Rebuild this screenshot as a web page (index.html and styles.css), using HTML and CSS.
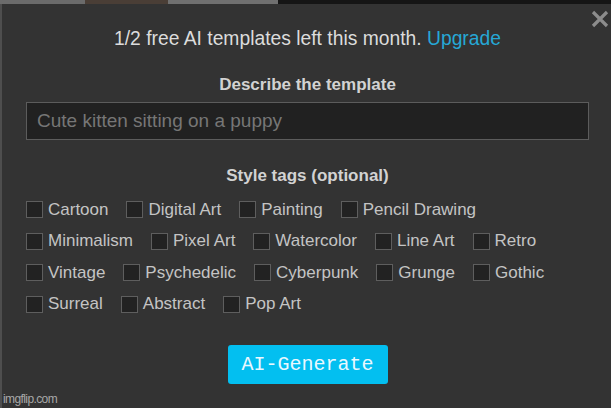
FILE: index.html
```html
<!DOCTYPE html>
<html>
<head>
<meta charset="utf-8">
<link rel="stylesheet" href="styles.css">
</head>
<body>
<div class="backdrop">
  <div class="seg seg-gray"></div>
  <div class="seg seg-photo"></div>
  <div class="seg seg-gray2"></div>
  <div class="seg seg-black"></div>
</div>
<div class="modal">
  <button class="close" aria-label="Close">
    <svg width="18" height="18" viewBox="0 0 18 18"><path d="M2 2 L16 16 M16 2 L2 16" stroke="#8c8c8c" stroke-width="3.2" stroke-linecap="butt"/></svg>
  </button>
  <div class="quota">1/2 free AI templates left this month. <a class="upgrade">Upgrade</a></div>
  <div class="label label-desc">Describe the template</div>
  <input class="prompt" type="text" placeholder="Cute kitten sitting on a puppy">
  <div class="label label-tags">Style tags (optional)</div>
  <div class="tags">
    <label class="tag"><span class="box"></span>Cartoon</label>
    <label class="tag"><span class="box"></span>Digital Art</label>
    <label class="tag"><span class="box"></span>Painting</label>
    <label class="tag"><span class="box"></span>Pencil Drawing</label>
    <label class="tag"><span class="box"></span>Minimalism</label>
    <label class="tag"><span class="box"></span>Pixel Art</label>
    <label class="tag"><span class="box"></span>Watercolor</label>
    <label class="tag"><span class="box"></span>Line Art</label>
    <label class="tag"><span class="box"></span>Retro</label>
    <label class="tag"><span class="box"></span>Vintage</label>
    <label class="tag"><span class="box"></span>Psychedelic</label>
    <label class="tag"><span class="box"></span>Cyberpunk</label>
    <label class="tag"><span class="box"></span>Grunge</label>
    <label class="tag"><span class="box"></span>Gothic</label>
    <label class="tag"><span class="box"></span>Surreal</label>
    <label class="tag"><span class="box"></span>Abstract</label>
    <label class="tag"><span class="box"></span>Pop Art</label>
  </div>
  <div class="actions">
    <button class="generate">AI-Generate</button>
  </div>
  <div class="watermark">imgflip.com</div>
</div>
</body>
</html>
```
FILE: styles.css
```css
html, body {
  margin: 0;
  padding: 0;
  width: 611px;
  height: 408px;
  overflow: hidden;
  background: #4e4e4e;
  font-family: "Liberation Sans", Arial, sans-serif;
}

.backdrop {
  display: flex;
  height: 4px;
}
.seg { height: 100%; }
.seg-gray { width: 85px; background: #6b6b6b; }
.seg-photo { width: 83px; background: #4a3e36; }
.seg-gray2 { width: 110px; background: #707070; }
.seg-black { flex: 1; background: #151515; }

.modal {
  position: relative;
  margin-left: 2px;
  width: 611px;
  height: 404px;
  box-sizing: border-box;
  background: #333333;
  padding: 24px 24px 0 24px;
  color: #d4d4d4;
}

.close {
  position: absolute;
  top: 6px;
  right: 4px;
  padding: 0;
  border: 0;
  background: none;
  width: 18px;
  height: 18px;
  display: block;
}
.close svg { display: block; }

.quota {
  text-align: center;
  font-size: 19.3px;
  line-height: 22px;
  color: #dcdcdc;
}
.upgrade {
  color: #26a8d6;
}

.label {
  text-align: center;
  font-weight: bold;
  font-size: 17px;
  line-height: 20px;
  color: #d2d2d2;
}
.label-desc { margin-top: 24.5px; }
.label-tags { margin-top: 26px; }

.prompt {
  display: block;
  box-sizing: border-box;
  margin-top: 7.5px;
  width: 100%;
  height: 38px;
  background: #212121;
  border: 1px solid #5c5c5c;
  padding: 0 10px;
  font-family: "Liberation Sans", Arial, sans-serif;
  font-size: 19px;
  color: #ddd;
  outline: none;
}
.prompt::placeholder { color: #767676; }

.tags {
  margin-top: 14.5px;
  display: flex;
  flex-wrap: wrap;
  column-gap: 18px;
  row-gap: 13.5px;
}
.tag {
  display: flex;
  align-items: center;
  height: 18px;
  font-size: 17px;
  color: #c4c4c4;
}
.box {
  width: 15px;
  height: 15px;
  border: 1px solid #5e5e5e;
  background: #222222;
  margin-right: 5px;
}

.actions {
  display: flex;
  justify-content: center;
  margin-top: 32px;
}
.generate {
  width: 160px;
  height: 39px;
  border: 0;
  border-radius: 3px;
  background: #03bff0;
  color: #eaf8ff;
  font-family: "Liberation Mono", "Courier New", monospace;
  font-size: 20px;
  padding: 0;
}

.watermark {
  position: absolute;
  left: 1px;
  bottom: 2px;
  font-size: 12px;
  letter-spacing: -0.6px;
  color: #a8a8a8;
}
```
